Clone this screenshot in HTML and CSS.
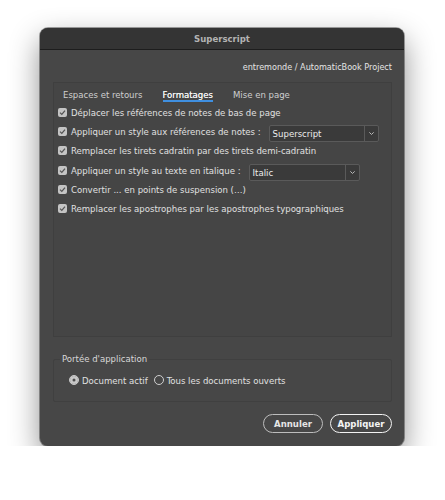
FILE: index.html
```html
<!DOCTYPE html>
<html lang="fr">
<head>
<meta charset="utf-8">
<title>Superscript</title>
<link rel="stylesheet" href="styles.css">
</head>
<body>
<div class="stage">
  <div class="window">
    <div class="titlebar">Superscript</div>
    <div class="content">
      <div class="project">entremonde / AutomaticBook Project</div>
      <div class="panel">
        <div class="tabs">
          <span class="tab">Espaces et retours</span>
          <span class="tab active">Formatages</span>
          <span class="tab">Mise en page</span>
        </div>
        <div class="options">
          <div class="row"><span class="check"><svg viewBox="0 0 9 9"><path d="M2 4.6 L3.8 6.4 L7 2.6" /></svg></span><span class="label">Déplacer les références de notes de bas de page</span></div>
          <div class="row"><span class="check"><svg viewBox="0 0 9 9"><path d="M2 4.6 L3.8 6.4 L7 2.6" /></svg></span><span class="label">Appliquer un style aux références de notes :</span>
            <div class="select sel-sup"><span class="sel-text">Superscript</span><span class="sel-arrow"><svg viewBox="0 0 8 5"><path d="M1.5 1.2 L4 3.6 L6.5 1.2" /></svg></span></div></div>
          <div class="row"><span class="check"><svg viewBox="0 0 9 9"><path d="M2 4.6 L3.8 6.4 L7 2.6" /></svg></span><span class="label">Remplacer les tirets cadratin par des tirets demi-cadratin</span></div>
          <div class="row"><span class="check"><svg viewBox="0 0 9 9"><path d="M2 4.6 L3.8 6.4 L7 2.6" /></svg></span><span class="label">Appliquer un style au texte en italique :</span>
            <div class="select sel-ita"><span class="sel-text">Italic</span><span class="sel-arrow"><svg viewBox="0 0 8 5"><path d="M1.5 1.2 L4 3.6 L6.5 1.2" /></svg></span></div></div>
          <div class="row"><span class="check"><svg viewBox="0 0 9 9"><path d="M2 4.6 L3.8 6.4 L7 2.6" /></svg></span><span class="label">Convertir ... en points de suspension (…)</span></div>
          <div class="row"><span class="check"><svg viewBox="0 0 9 9"><path d="M2 4.6 L3.8 6.4 L7 2.6" /></svg></span><span class="label">Remplacer les apostrophes par les apostrophes typographiques</span></div>
        </div>
      </div>
      <fieldset class="scope">
        <legend>Portée d'application</legend>
        <div class="radios">
          <span class="radio on"></span><span class="rlabel">Document actif</span>
          <span class="radio"></span><span class="rlabel">Tous les documents ouverts</span>
        </div>
      </fieldset>
      <div class="actions">
        <span class="btn">Annuler</span>
        <span class="btn primary">Appliquer</span>
      </div>
    </div>
  </div>
</div>
</body>
</html>
```
FILE: styles.css
```css
html, body {
  margin: 0;
  padding: 0;
  background: #ffffff;
}
body {
  font-family: "DejaVu Sans Condensed", "DejaVu Sans", sans-serif;
  font-stretch: condensed;
  font-size: 9.5px;
  color: #e0e0e0;
}
.stage {
  padding: 28px 0 0 40px;
}
.window {
  width: 364px;
  height: 418px;
  border-radius: 8px;
  background: #474747;
  box-shadow: 0 12px 30px rgba(0, 0, 0, 0.45), 0 0 0 1px rgba(0, 0, 0, 0.35);
  overflow: hidden;
  display: flex;
  flex-direction: column;
}
.titlebar {
  height: 21px;
  line-height: 21px;
  background: #343434;
  border-bottom: 1px solid #1d1d1d;
  text-align: center;
  font-weight: bold;
  color: #b3b3b3;
  font-size: 9.5px;
}
.content {
  flex: 1;
  padding: 10px 12px 0 13px;
  display: flex;
  flex-direction: column;
}
.project {
  text-align: right;
  line-height: 14px;
  height: 14px;
  font-size: 9px;
  color: #e4e4e4;
}
.panel {
  margin-top: 8px;
  height: 253px;
  border: 1px solid #3f3f3f;
  background: #454545;
  padding: 0 0 0 3px;
}
.tabs {
  display: flex;
  gap: 20px;
  padding: 6px 0 0 6px;
  height: 13px;
}
.tab {
  line-height: 12px;
  color: #cfcfcf;
  border-bottom: 2px solid transparent;
}
.tab.active {
  color: #f2f2f2;
  border-bottom-color: #3f8fe0;
  text-shadow: 0 0 0.4px #f2f2f2;
}
.options {
  padding-top: 1px;
}
.row {
  display: flex;
  align-items: center;
  height: 19.2px;
}
.check {
  width: 9px;
  height: 9px;
  border-radius: 2px;
  background: #c4c4c4;
  margin: 0 4px 0 1px;
  display: flex;
}
.check svg {
  width: 9px;
  height: 9px;
}
.check path {
  fill: none;
  stroke: #555555;
  stroke-width: 1.3;
}
.label {
  white-space: nowrap;
}
.select {
  display: flex;
  height: 15px;
  margin-top: 4px;
  border: 1px solid #5a5a5a;
  background: #3a3a3a;
  border-radius: 2px;
}
.sel-sup {
  width: 108px;
  margin-left: 8px;
}
.sel-ita {
  width: 109px;
  margin-left: 8px;
}
.sel-text {
  flex: 1;
  padding-left: 3px;
  line-height: 15px;
  color: #ececec;
}
.sel-arrow {
  width: 13px;
  border-left: 1px solid #5a5a5a;
  display: flex;
  align-items: center;
  justify-content: center;
}
.sel-arrow svg {
  width: 7px;
  height: 5px;
}
.sel-arrow path {
  fill: none;
  stroke: #bdbdbd;
  stroke-width: 1.1;
}
.scope {
  margin: 16px 0 0 0;
  padding: 8px 0 0 0;
  height: 39px;
  border: 1px solid #404040;
  border-radius: 2px;
}
.scope legend {
  padding: 0 2px;
  margin-left: 6px;
  color: #d8d8d8;
  line-height: 12px;
}
.radios {
  display: flex;
  align-items: center;
  height: 14px;
  padding-left: 15px;
}
.radio {
  width: 8px;
  height: 8px;
  border-radius: 50%;
  border: 1px solid #cfcfcf;
  margin-right: 3px;
  box-sizing: content-box;
}
.radio.on {
  background: #c8c8c8;
  box-shadow: inset 0 0 0 2.5px #c8c8c8, inset 0 0 0 5px #4d4d4d;
  border-color: #c8c8c8;
}
.rlabel {
  margin-right: 6px;
}
.actions {
  display: flex;
  justify-content: flex-end;
  gap: 7px;
  margin-top: 12px;
  padding-right: 0;
}
.btn {
  height: 17px;
  line-height: 17px;
  border: 1px solid #bdbdbd;
  border-radius: 10px;
  font-weight: bold;
  color: #e6e6e6;
  text-align: center;
}
.btn:first-child {
  width: 58px;
}
.btn.primary {
  width: 60px;
  border: 1.5px solid #f2f2f2;
  color: #f4f4f4;
}
```
